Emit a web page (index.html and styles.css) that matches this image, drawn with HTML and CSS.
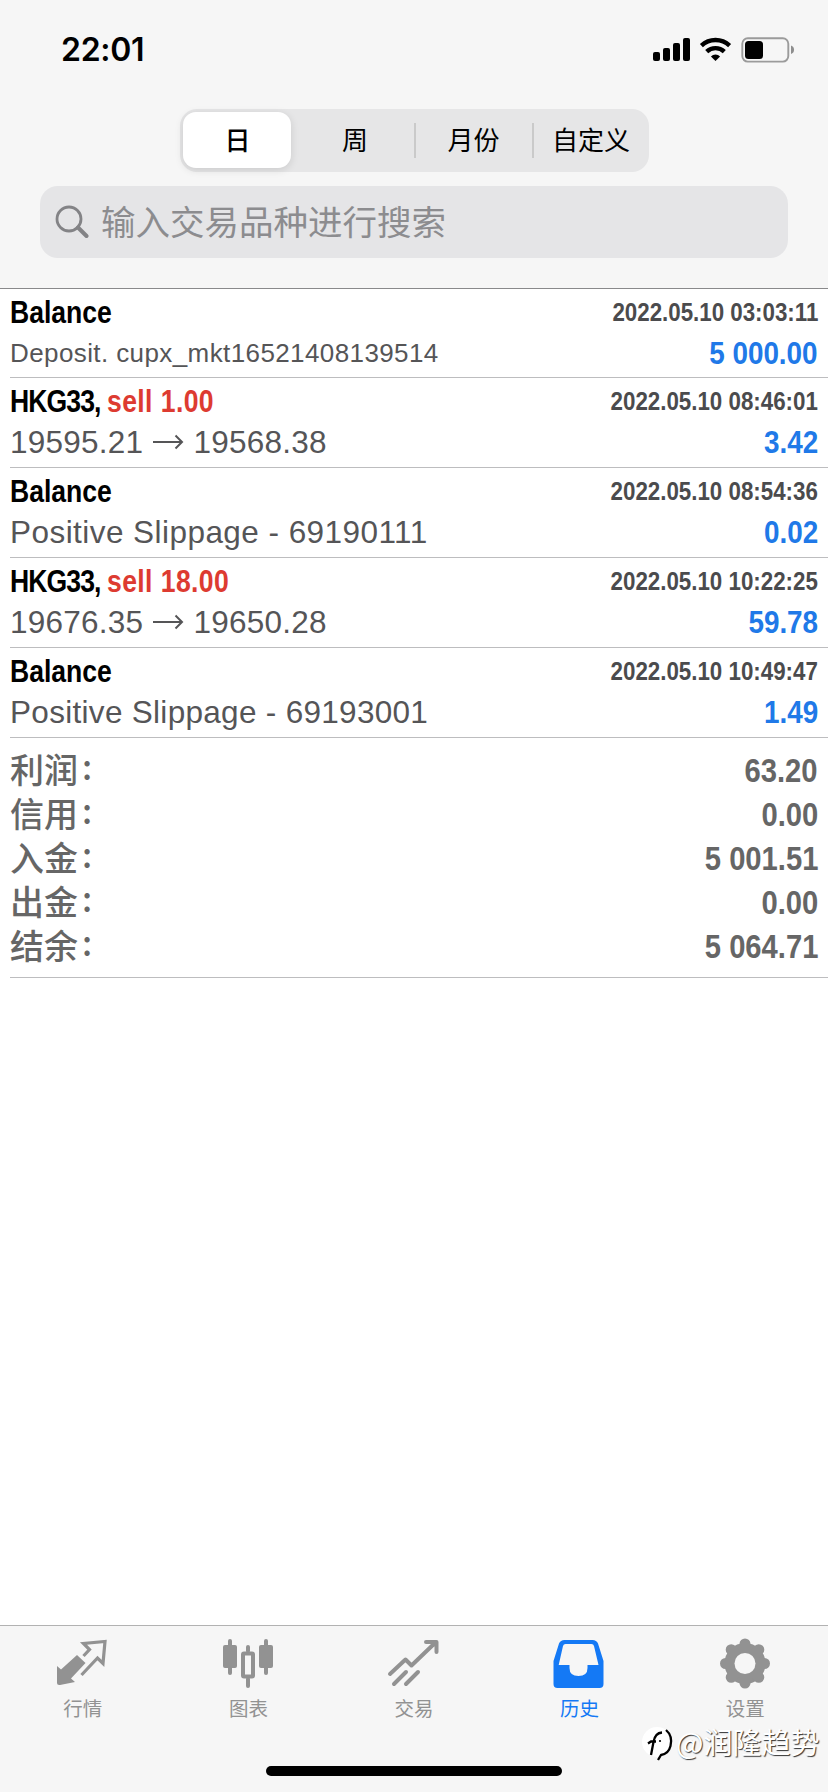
FILE: index.html
```html
<!DOCTYPE html>
<html lang="zh-CN">
<head>
<meta charset="utf-8">
<title>历史</title>
<link rel="stylesheet" href="styles.css">
</head>
<body>
<div class="screen">
  <header class="header">
    <div class="status">
      <span class="clock">22:01</span>
      <svg class="status-icons" width="144" height="30" viewBox="0 0 144 30">
        <rect x="1" y="17" width="7" height="9" rx="2"/>
        <rect x="11" y="13" width="7" height="13" rx="2"/>
        <rect x="21" y="8" width="7" height="18" rx="2"/>
        <rect x="31" y="3" width="7" height="23" rx="2"/>
        <g fill="none" stroke="#000" stroke-width="4.4">
          <path d="M49.4 10.6a20.6 20.6 0 0 1 28.2 0"/>
          <path d="M54.7 16.6a12.8 12.8 0 0 1 17.6 0"/>
        </g>
        <path d="M63.500 26l-4.600-4.600a6.800 6.800 0 0 1 9.200 0z"/>
        <rect x="90.300" y="3.200" width="46" height="23.400" rx="5.500" fill="none" stroke="#9b9b9b" stroke-width="1.900"/>
        <rect x="93" y="6" width="18" height="18" rx="3.500"/>
        <path d="M139 10.500a4.500 4.500 0 0 1 0 8.500z" fill="#8e8e8e"/>
      </svg>
    </div>
    <nav class="segments">
      <span class="segment active">日</span>
      <span class="segment">周</span>
      <span class="segment divided">月份</span>
      <span class="segment divided">自定义</span>
    </nav>
    <div class="search">
      <svg width="34" height="34" viewBox="0 0 34 34" fill="none" stroke="#838386">
        <circle cx="14" cy="14" r="12" stroke-width="2.800"/>
        <path d="M23 22.500l8.500 8.500" stroke-width="4" stroke-linecap="round"/>
      </svg>
      <span>输入交易品种进行搜索</span>
    </div>
  </header>

  <main class="list">
    <section class="deal">
      <div class="line"><b class="title">Balance</b><span class="date">2022.05.10 03:03:11</span></div>
      <div class="line detail"><span class="note small">Deposit. cupx_mkt16521408139514</span><span class="amount">5 000.00</span></div>
    </section>
    <section class="deal">
      <div class="line"><b class="title"><span class="symbol">HKG33, </span><i>sell 1.00</i></b><span class="date">2022.05.10 08:46:01</span></div>
      <div class="line detail"><span class="note price">19595.21 <svg class="arrow" viewBox="0 0 32 16"><path d="M1 8h29M23.500 1.500l6.500 6.500-6.500 6.500"/></svg> 19568.38</span><span class="amount">3.42</span></div>
    </section>
    <section class="deal">
      <div class="line"><b class="title">Balance</b><span class="date">2022.05.10 08:54:36</span></div>
      <div class="line detail"><span class="note ones">Positive Slippage - 69190111</span><span class="amount">0.02</span></div>
    </section>
    <section class="deal">
      <div class="line"><b class="title"><span class="symbol">HKG33, </span><i>sell 18.00</i></b><span class="date">2022.05.10 10:22:25</span></div>
      <div class="line detail"><span class="note price">19676.35 <svg class="arrow" viewBox="0 0 32 16"><path d="M1 8h29M23.500 1.500l6.500 6.500-6.500 6.500"/></svg> 19650.28</span><span class="amount">59.78</span></div>
    </section>
    <section class="deal">
      <div class="line"><b class="title">Balance</b><span class="date">2022.05.10 10:49:47</span></div>
      <div class="line detail"><span class="note">Positive Slippage - 69193001</span><span class="amount">1.49</span></div>
    </section>
    <section class="totals">
      <div class="total"><span class="label">利润<em>:</em></span><span class="sum">63.20</span></div>
      <div class="total"><span class="label">信用<em>:</em></span><span class="sum">0.00</span></div>
      <div class="total"><span class="label">入金<em>:</em></span><span class="sum">5 001.51</span></div>
      <div class="total"><span class="label">出金<em>:</em></span><span class="sum">0.00</span></div>
      <div class="total"><span class="label">结余<em>:</em></span><span class="sum">5 064.71</span></div>
    </section>
  </main>

  <footer class="tabbar">
    <div class="tabs">
      <div class="tab">
        <svg width="52" height="52" viewBox="0 0 52 52">
          <path d="M1 29l4 3.500L21 18l8.500 8L15 41.500l4 3.500L4 48Q1 48.500 1 46z" fill="currentColor"/>
          <path d="M27.500 19l6-6.500-6-6 21.500-2-2 22-5.500-5.500-16 17" fill="none" stroke="currentColor" stroke-width="3.200"/>
        </svg>
        <span>行情</span>
      </div>
      <div class="tab">
        <svg width="52" height="52" viewBox="0 0 52 52" fill="currentColor">
          <rect x="1" y="8" width="14" height="23" rx="2"/><rect x="6" y="2" width="4" height="36" rx="2"/>
          <rect x="37" y="8" width="14" height="23" rx="2"/><rect x="42" y="2" width="4" height="36" rx="2"/>
          <rect x="21" y="16.500" width="10" height="23" rx="1" fill="none" stroke="currentColor" stroke-width="4"/>
          <rect x="24" y="8" width="4" height="8" rx="2"/><rect x="24" y="40" width="4" height="11" rx="2"/>
        </svg>
        <span>图表</span>
      </div>
      <div class="tab">
        <svg width="52" height="52" viewBox="0 0 52 52" fill="none" stroke="currentColor" stroke-width="4" stroke-linecap="round" stroke-linejoin="round">
          <path d="M3 37l15.500-14.500 6 6L49 5M39 5h10.500v10M7 47l12-12M19 47l12-12"/>
        </svg>
        <span>交易</span>
      </div>
      <div class="tab current">
        <svg width="52" height="52" viewBox="0 0 52 52">
          <path fill="currentColor" fill-rule="evenodd" d="M11.500 3h28q4 0 5.500 3.500L50.500 24v23q0 4-4 4h-42q-4 0-4-4V24L6 6.500Q7.500 3 11.500 3zM12.500 7Q10.500 7 10 9L5.700 28H16.500v3q0 8 9 8q9 0 9-8v-3h11L41 9q-.500-2-2.500-2z"/>
        </svg>
        <span>历史</span>
      </div>
      <div class="tab">
        <svg width="52" height="52" viewBox="0 0 52 52">
          <g fill="none" stroke="currentColor"><circle cx="26" cy="26.500" r="15" stroke-width="11"/>
          <path d="M26 7v39M6.500 26.500h39M12.200 12.700l27.600 27.600M39.800 12.700L12.200 40.300" stroke-width="11" stroke-linecap="round"/></g>
          <circle cx="26" cy="26.500" r="10.500" fill="#f6f6f6"/>
        </svg>
        <span>设置</span>
      </div>
    </div>
    <div class="home"></div>
    <div class="watermark">
      <svg width="34" height="36" viewBox="0 0 34 36">
        <circle cx="15" cy="15" r="15" fill="#fff"/>
        <circle cx="18" cy="15" r="12" fill="#fff"/>
        <path d="M9 28l2.500-13M6 16.500l3-2h5M11.500 15Q13 6 20 5.500M24 3q7 6 4.500 16-2 8-9.500 9l-3 5" fill="none" stroke="#000" stroke-width="2.300"/>
        <circle cx="18" cy="14" r="1.100"/>
      </svg>
      <span>@润隆趋势</span>
    </div>
  </footer>
</div>
</body>
</html>
```
FILE: styles.css
```css
* { box-sizing: border-box; }
body { margin: 0; background: #fff; font-family: "Liberation Sans", "Noto Sans CJK SC", sans-serif; }
.screen { width: 828px; height: 1792px; display: flex; flex-direction: column; background: #fff; overflow: hidden; }

.header { height: 289px; flex: none; background: #f6f6f6; border-bottom: 1px solid #89898b; }
.status { height: 109px; padding: 32px 32px 0 61px; display: flex; justify-content: space-between; align-items: flex-start; }
.clock { font: 600 32px/36px Inter, sans-serif; letter-spacing: -.3px; }
.status-icons { margin-top: 3px; }
.segments { width: 469px; height: 63px; margin-left: 180px; padding: 3px 0 3px 3px; display: grid; grid-template-columns: 112px 119px 118px 117px; background: #e6e6e7; border-radius: 17px; font: 26px/50px "Noto Sans CJK SC", sans-serif; }
.segment { text-align: center; padding: 2px 0 0 1px; margin-bottom: 1px; }
.segment.active { margin-right: 4px; background: #fff; border-radius: 13px; font-weight: 500; box-shadow: 0 2px 8px rgba(0,0,0,.12); }
.segment.divided { background: linear-gradient(#cacaca, #cacaca) 0 11px / 2px 35px no-repeat; }
.search { margin: 14px 40px 0; height: 72px; padding: 0 15px; display: flex; align-items: center; gap: 12px; background: #e5e5e7; border-radius: 18px; color: #8c8c8f; font: 34.500px/68px "Noto Sans CJK SC", sans-serif; }
.search span { margin-top: -4px; }

.list { flex: 1; padding-left: 10px; }
.deal { height: 90px; border-bottom: 1px solid #bdbdbf; padding-right: 10px; }
.deal:first-child { height: 89px; }
.line { display: flex; justify-content: space-between; height: 44px; line-height: 46px; white-space: nowrap; }
.detail { height: 40px; line-height: 40px; }
.title { font-size: 32px; transform: scaleX(.83); transform-origin: left; }
.symbol { letter-spacing: -1.1px; }
.title i { font-style: normal; letter-spacing: .5px; color: #dd3b31; }
.date { font-size: 25.500px; font-weight: bold; color: #4b4b4d; transform: scaleX(.875); transform-origin: right; }
.note { font-size: 31.500px; letter-spacing: .3px; color: #555557; }
.note.ones { letter-spacing: .45px; }
.note.price { letter-spacing: .25px; }
.note.small { font-size: 26px; letter-spacing: .4px; }
.arrow { width: 32px; height: 16px; fill: none; stroke: #555557; stroke-width: 2; position: relative; top: -3px; }
.amount { font-size: 32px; line-height: 41px; font-weight: bold; color: #2079e8; transform: scaleX(.87); transform-origin: right; }

.totals { height: 240px; padding: 10px 10px 0 0; border-bottom: 1px solid #bdbdbf; }
.total { height: 44px; display: flex; justify-content: space-between; line-height: 46px; color: #666; }
.label { font: 500 34px/42px "Noto Sans CJK SC", sans-serif; }
.label em { font-style: normal; margin-left: 4px; position: relative; top: -3px; }
.sum { font-size: 33px; font-weight: bold; transform: scaleX(.885); transform-origin: right; }

.tabbar { height: 167px; flex: none; position: relative; background: #f6f6f6; border-top: 1px solid #b2b2b2; }
.tabs { display: grid; grid-template-columns: repeat(5, 1fr); height: 127px; padding-top: 11px; }
.tab { display: flex; flex-direction: column; align-items: center; gap: 4px; color: #929292; font: 19.500px/30px "Noto Sans CJK SC", sans-serif; }
.tab svg { margin-left: -1px; }
.tab.current { color: #1479f5; }
.home { width: 296px; height: 10px; margin: 13px 0 0 266px; border-radius: 5px; background: #000; }
.watermark { position: absolute; left: 642px; top: 101px; display: flex; color: #fff; font: 29px/28px "Noto Sans CJK SC", sans-serif; text-shadow: 1px 1px 1px #333; }
```
